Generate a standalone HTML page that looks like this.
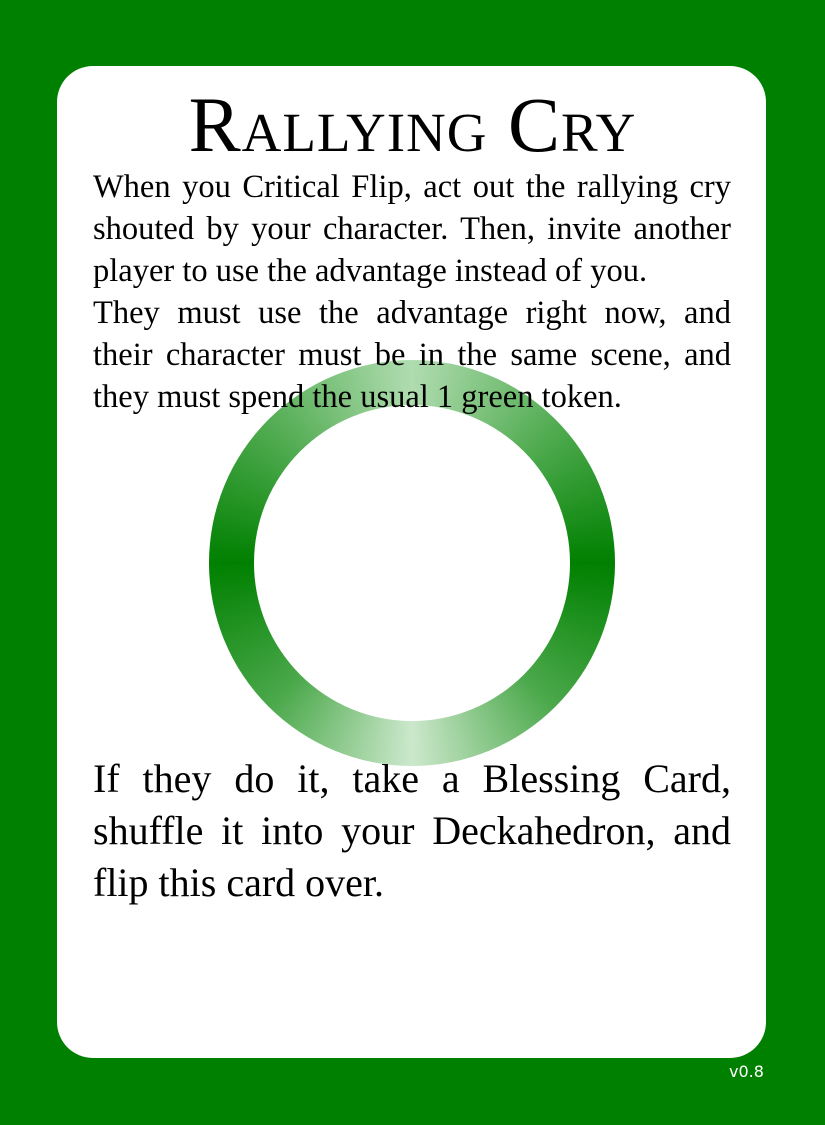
<!DOCTYPE html>
<html><head><meta charset="utf-8"><style>
html,body{margin:0;padding:0;}
body{width:825px;height:1125px;background:#008000;position:relative;overflow:hidden;font-family:"Liberation Serif",serif;}
.card{position:absolute;left:57px;top:66px;width:709px;height:992px;background:#fff;border-radius:36px;}
.title{position:absolute;left:0;width:825px;top:80px;text-align:center;font-size:78px;line-height:90px;font-variant:small-caps;letter-spacing:1px;color:#000;}
.body{position:absolute;left:93px;width:638px;top:166px;font-size:32.5px;line-height:42px;color:#000;}
.body div,.bottom div{text-align:justify;text-align-last:justify;white-space:nowrap;}
.body div.l,.bottom div.l{text-align-last:left;}
.ring{position:absolute;left:209px;top:360px;width:406px;height:406px;border-radius:50%;
background:conic-gradient(from 0deg, #b0dcb0 0deg, #4aa84a 50deg, #008000 90deg, #4aa84a 135deg, #cce8cc 180deg, #4aa84a 225deg, #008000 270deg, #4aa84a 310deg, #b0dcb0 360deg);}
.hole{position:absolute;left:254px;top:405px;width:316px;height:316px;border-radius:50%;background:#fff;}
.bottom{position:absolute;left:93px;width:638px;top:753px;font-size:40px;line-height:52px;color:#000;}
.ver{position:absolute;left:729px;top:1062px;font-family:"DejaVu Sans",sans-serif;font-size:16px;color:#fff;}
</style></head><body>
<div class="card"></div>
<div class="ring"></div><div class="hole"></div>
<div class="title">Rallying Cry</div>
<div class="body">
<div>When you Critical Flip, act out the rallying cry</div>
<div>shouted by your character. Then, invite another</div>
<div class="l">player to use the advantage instead of you.</div>
<div>They must use the advantage right now, and</div>
<div>their character must be in the same scene, and</div>
<div class="l">they must spend the usual 1 green token.</div>
</div>
<div class="bottom">
<div>If they do it, take a Blessing Card,</div>
<div>shuffle it into your Deckahedron, and</div>
<div class="l">flip this card over.</div>
</div>
<div class="ver">v0.8</div>
</body></html>
